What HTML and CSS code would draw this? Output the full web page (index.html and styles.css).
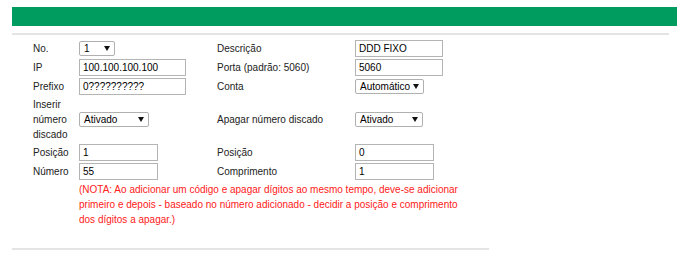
FILE: index.html
```html
<!DOCTYPE html>
<html lang="pt">
<head>
<meta charset="utf-8">
<title>Rota</title>
<link rel="stylesheet" href="styles.css">
</head>
<body>
<div class="topbar"></div>
<div class="rule rule-top"></div>
<div class="form">
  <div class="lbl">No.</div>
  <div class="ctl"><span class="sel w36"><span>1</span><svg class="arr" width="6" height="5" viewBox="0 0 6 5"><path d="M0 0H6L3 5Z"/></svg></span></div>
  <div class="lbl">Descrição</div>
  <div class="ctl"><span class="inp w88">DDD FIXO</span></div>

  <div class="lbl">IP</div>
  <div class="ctl"><span class="inp w107">100.100.100.100</span></div>
  <div class="lbl">Porta (padrão: 5060)</div>
  <div class="ctl"><span class="inp w88">5060</span></div>

  <div class="lbl">Prefixo</div>
  <div class="ctl"><span class="inp w107">0??????????</span></div>
  <div class="lbl">Conta</div>
  <div class="ctl"><span class="sel w69"><span>Automático</span><svg class="arr" width="6" height="5" viewBox="0 0 6 5"><path d="M0 0H6L3 5Z"/></svg></span></div>

  <div class="lbl multi">Inserir número discado</div>
  <div class="ctl"><span class="sel w70"><span>Ativado</span><svg class="arr" width="6" height="5" viewBox="0 0 6 5"><path d="M0 0H6L3 5Z"/></svg></span></div>
  <div class="lbl">Apagar número discado</div>
  <div class="ctl"><span class="sel w68"><span>Ativado</span><svg class="arr" width="6" height="5" viewBox="0 0 6 5"><path d="M0 0H6L3 5Z"/></svg></span></div>

  <div class="lbl">Posição</div>
  <div class="ctl"><span class="inp w79">1</span></div>
  <div class="lbl">Posição</div>
  <div class="ctl"><span class="inp w79">0</span></div>

  <div class="lbl">Número</div>
  <div class="ctl"><span class="inp w79">55</span></div>
  <div class="lbl">Comprimento</div>
  <div class="ctl"><span class="inp w79">1</span></div>

  <div class="note">(NOTA: Ao adicionar um código e apagar dígitos ao mesmo tempo, deve-se adicionar primeiro e depois - baseado no número adicionado - decidir a posição e comprimento dos dígitos a apagar.)</div>
</div>
<div class="rule rule-bottom"></div>
</body>
</html>
```

FILE: styles.css
```css
html, body {
  margin: 0;
  padding: 0;
  background: #fff;
}
body {
  font-family: "Liberation Sans", Arial, sans-serif;
  font-size: 10px;
  color: #222;
}
.topbar {
  margin: 7px 0 0 12px;
  width: 665px;
  height: 19px;
  background: #009b5f;
}
.rule {
  height: 2px;
  background: #e4e4e4;
  margin-left: 12px;
}
.rule-top {
  margin-top: 7px;
  width: 657px;
}
.rule-bottom {
  margin-top: 21px;
  width: 477px;
}
.form {
  margin: 5px 0 0 33px;
  display: grid;
  grid-template-columns: 46px 138px 138px auto;
  row-gap: 2px;
  align-items: center;
}
.lbl {
  line-height: 17px;
  white-space: nowrap;
}
.lbl.multi {
  white-space: normal;
  line-height: 15px;
}
.ctl {
  display: flex;
  align-items: center;
  height: 17px;
}
.inp {
  box-sizing: border-box;
  height: 17px;
  border: 1px solid #b4b4b4;
  padding: 0 3px;
  line-height: 15px;
  color: #000;
  background: #fff;
  white-space: nowrap;
  overflow: hidden;
}
.sel {
  box-sizing: border-box;
  height: 15px;
  border: 1px solid #b0b0b0;
  border-radius: 2px;
  padding: 0 4px 0 4px;
  display: flex;
  align-items: center;
  justify-content: space-between;
  color: #000;
  background: #fff;
  white-space: nowrap;
}
.arr {
  fill: #111;
  flex: none;
}
.w36 { width: 36px; }
.w68 { width: 68px; }
.w69 { width: 69px; }
.w70 { width: 70px; }
.w79 { width: 79px; }
.w88 { width: 88px; }
.w107 { width: 107px; }
.note {
  grid-column: 2 / 5;
  max-width: 395px;
  color: #ff2020;
  line-height: 15px;
  margin-top: 0;
}
```
